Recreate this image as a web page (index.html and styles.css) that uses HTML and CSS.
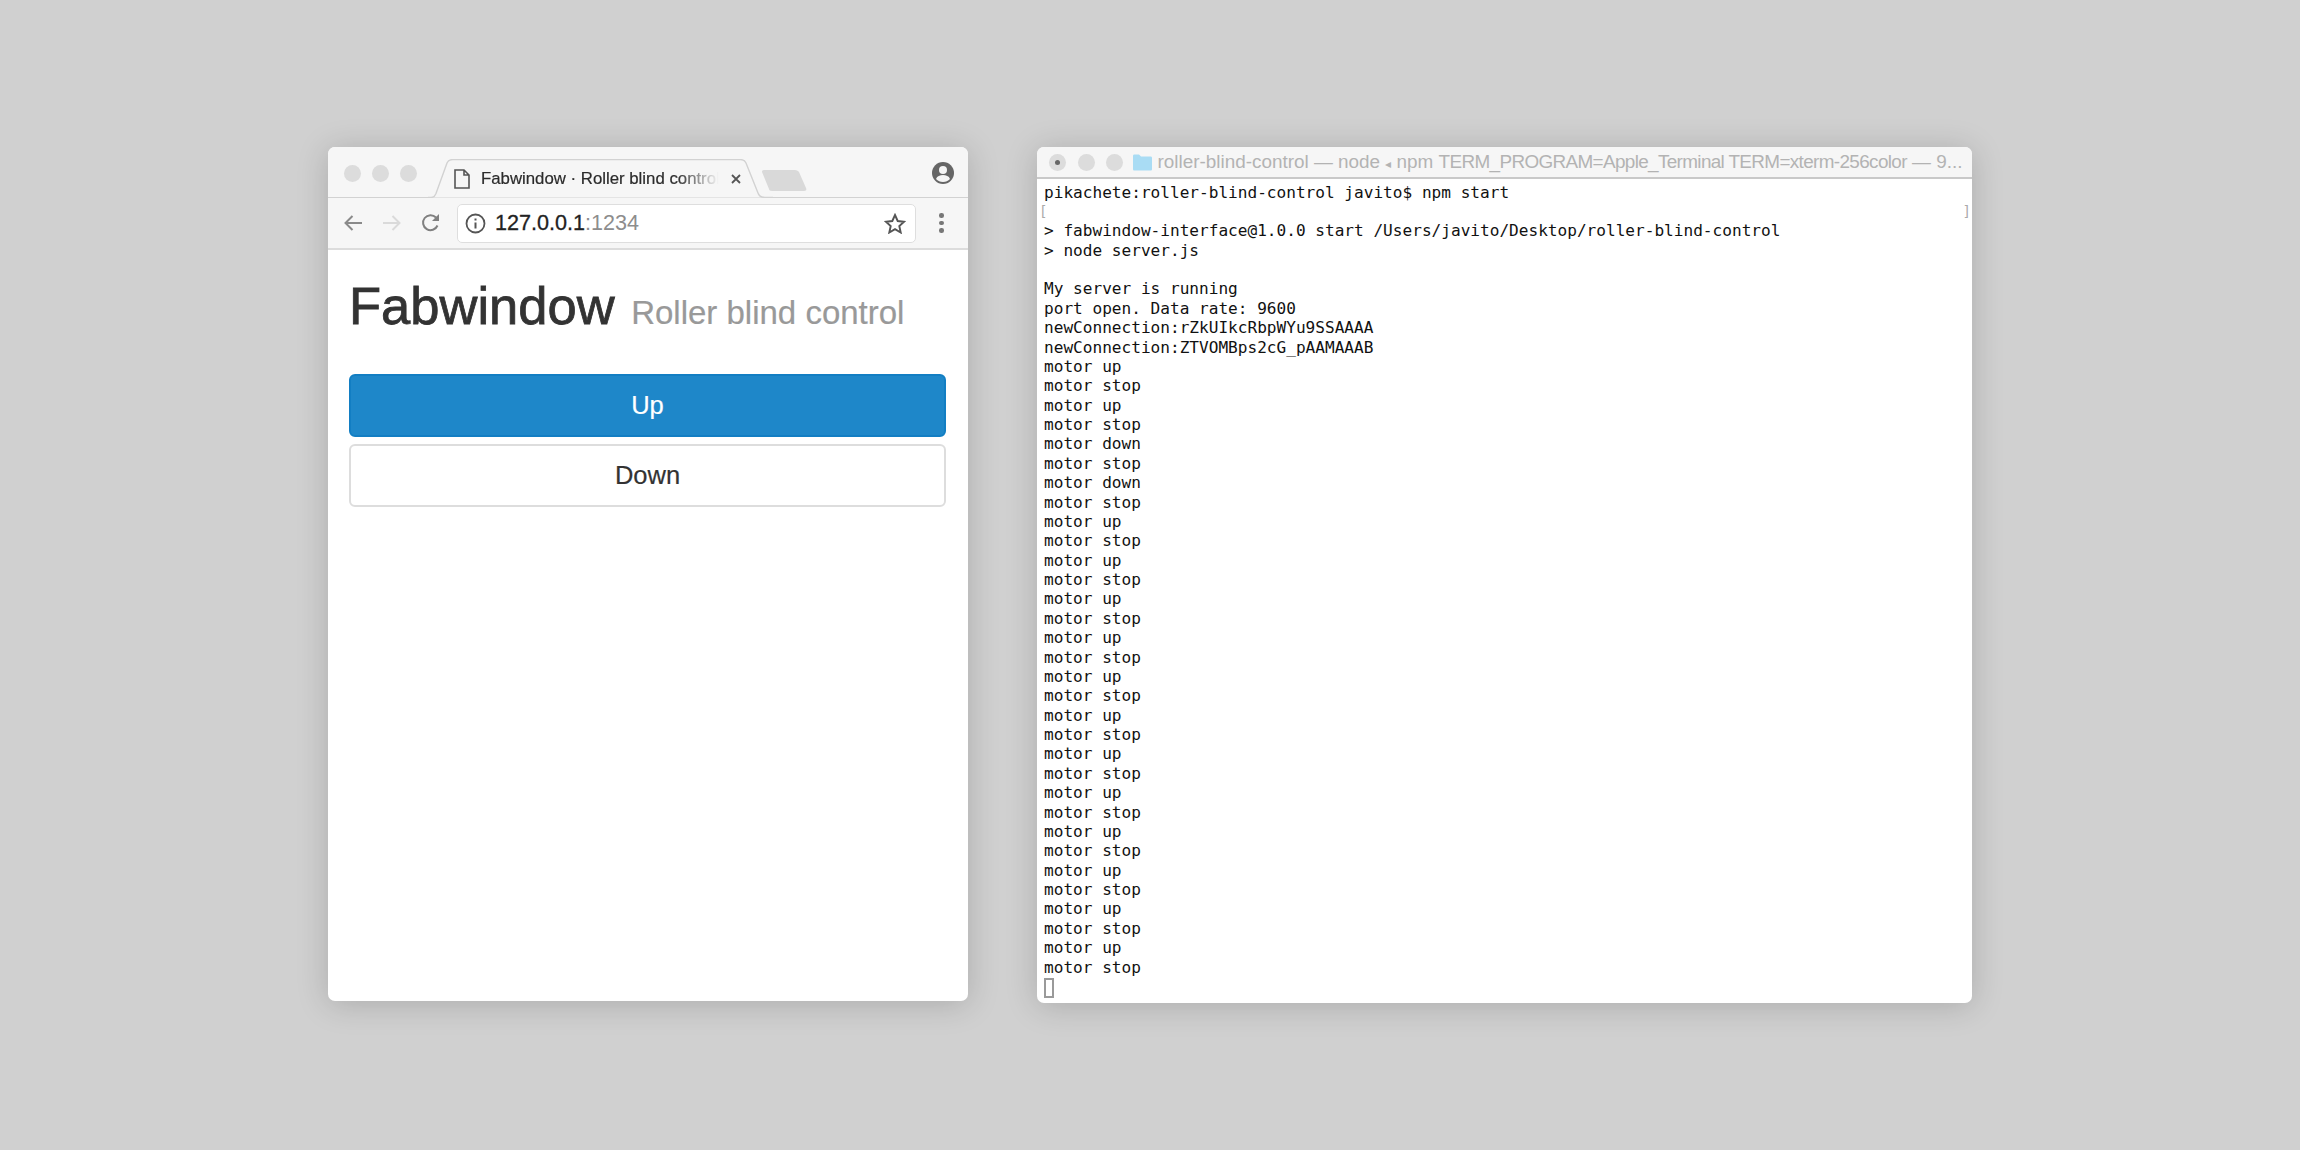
FILE: index.html
```html
<!DOCTYPE html>
<html lang="en">
<head>
<meta charset="utf-8">
<title>Fabwindow</title>
<link rel="stylesheet" href="styles.css">
</head>
<body>
<main class="desk">
  <section class="browser">
    <div class="tabstrip">
      <div class="lights"><i class="light"></i><i class="light"></i><i class="light"></i></div>
      <div class="tab">
        <svg class="tab-bg" width="345" height="39" viewBox="0 0 345 39"><path d="M0 38.5H3C6 38.5 7 37 8 34.5L19 4C20 1.5 22 .5 25 .5H312C315 .5 317 1.5 318 4L330 34C331 37 333 38.5 337 38.5H345" fill="#f6f6f6" stroke="#d2d2d2" stroke-width="1.4"/></svg>
        <svg class="doc" width="18" height="20" viewBox="0 0 18 20"><path d="M2 1H11L16 6V19H2Z M11 1V6H16" fill="none" stroke="#555" stroke-width="1.6"/></svg>
        <span class="tab-title">Fabwindow · Roller blind control</span>
        <svg class="close" width="12" height="12" viewBox="0 0 12 12"><path d="M2 2L10 10M10 2L2 10" stroke="#555" stroke-width="1.8"/></svg>
      </div>
      <svg class="newtab" width="46" height="23" viewBox="0 0 46 23"><path d="M3 1H34C36 1 37 2 38 3L45 19C46 21 45 22 43 22H11C9 22 8 21 8 20L1 3C1 2 1 1 3 1Z" fill="#d9d9d9"/></svg>
      <svg class="avatar" width="24" height="24" viewBox="0 0 24 24"><circle cx="12" cy="12" r="11" fill="#666"/><circle cx="12" cy="9" r="4" fill="#f5f5f5"/><path d="M5 18C6 15 9 14 12 14S18 15 19 18C17 20 15 21 12 21S7 20 5 18Z" fill="#f5f5f5"/></svg>
    </div>
    <div class="toolbar">
      <svg class="nav" width="20" height="18" viewBox="0 0 20 18"><path d="M19 9H3M9.500 2L2.500 9L9.500 16" fill="none" stroke="#8a8a8a" stroke-width="2"/></svg>
      <svg class="nav" width="20" height="18" viewBox="0 0 20 18"><path d="M1 9H17M10.500 2L17.500 9L10.500 16" fill="none" stroke="#dadada" stroke-width="2"/></svg>
      <svg class="nav reload" width="20" height="20" viewBox="0 0 20 20"><path d="M16.500 12.500A7.500 7.500 0 1 1 15 4.500" fill="none" stroke="#808080" stroke-width="2"/><path d="M18 1V8H11Z" fill="#808080"/></svg>
      <div class="omnibox">
        <svg class="info" width="21" height="21" viewBox="0 0 21 21"><circle cx="10.500" cy="10.500" r="9" fill="none" stroke="#555" stroke-width="1.8"/><path d="M10.500 9.500V15.500M10.500 5.500V7.500" stroke="#555" stroke-width="2"/></svg>
        <span class="url">127.0.0.1<span class="port">:1234</span></span>
        <svg class="star" width="22" height="21" viewBox="0 0 22 21"><path d="M11 2L13.700 8L20 8.700L15.300 13L16.700 19.500L11 16.200L5.300 19.500L6.700 13L2 8.700L8.300 8Z" fill="none" stroke="#555" stroke-width="1.900"/></svg>
      </div>
      <div class="dots"><i></i><i></i><i></i></div>
    </div>
    <div class="page">
      <h1 class="heading">Fabwindow <small class="sub">Roller blind control</small></h1>
      <button class="btn btn-up">Up</button>
      <button class="btn btn-down">Down</button>
    </div>
  </section>

  <section class="terminal">
    <div class="titlebar">
      <i class="tl tl-close"></i><i class="tl"></i><i class="tl"></i>
      <svg class="folder" width="20" height="17" viewBox="0 0 20 17"><path d="M1 2C1 1 1.500 .5 2.500 .5H7L9 2.500H18.500C19.500 2.500 20 3 20 4V15C20 16 19.500 16.500 18.500 16.500H2.500C1.500 16.500 1 16 1 15Z" fill="#a9dcf4"/></svg>
      <span class="term-title">roller-blind-control — node <span class="tri">◂</span> npm <span class="env">TERM_PROGRAM=Apple_Terminal TERM=xterm-256color</span> — 9...</span>
    </div>
    <div class="console">
      <div class="line">pikachete:roller-blind-control javito$ npm start</div>
      <div class="line marks"><span>[</span><span>]</span></div>
      <div class="line">&gt; fabwindow-interface@1.0.0 start /Users/javito/Desktop/roller-blind-control</div>
      <div class="line">&gt; node server.js</div>
      <div class="line">&nbsp;</div>
      <div class="line">My server is running</div>
      <div class="line">port open. Data rate: 9600</div>
      <div class="line">newConnection:rZkUIkcRbpWYu9SSAAAA</div>
      <div class="line">newConnection:ZTVOMBps2cG_pAAMAAAB</div>
      <div class="line">motor up</div>
      <div class="line">motor stop</div>
      <div class="line">motor up</div>
      <div class="line">motor stop</div>
      <div class="line">motor down</div>
      <div class="line">motor stop</div>
      <div class="line">motor down</div>
      <div class="line">motor stop</div>
      <div class="line">motor up</div>
      <div class="line">motor stop</div>
      <div class="line">motor up</div>
      <div class="line">motor stop</div>
      <div class="line">motor up</div>
      <div class="line">motor stop</div>
      <div class="line">motor up</div>
      <div class="line">motor stop</div>
      <div class="line">motor up</div>
      <div class="line">motor stop</div>
      <div class="line">motor up</div>
      <div class="line">motor stop</div>
      <div class="line">motor up</div>
      <div class="line">motor stop</div>
      <div class="line">motor up</div>
      <div class="line">motor stop</div>
      <div class="line">motor up</div>
      <div class="line">motor stop</div>
      <div class="line">motor up</div>
      <div class="line">motor stop</div>
      <div class="line">motor up</div>
      <div class="line">motor stop</div>
      <div class="line">motor up</div>
      <div class="line">motor stop</div>
      <div class="line"><i class="cursor"></i></div>
    </div>
  </section>
</main>
</body>
</html>
```
FILE: styles.css
```css
* { box-sizing: border-box; }
html, body { margin: 0; height: 100%; }
body { background: #d0d0d0; overflow: hidden; font-family: "Liberation Sans", Arial, sans-serif; }
.desk { display: flex; align-items: flex-start; gap: 69px; padding: 147px 0 0 328px; }

.browser { width: 640px; height: 854px; display: flex; flex-direction: column; background: #fff; border-radius: 7px; overflow: hidden; box-shadow: 0 3px 32px rgba(0,0,0,.18); }
.tabstrip { height: 51px; flex: none; display: flex; align-items: flex-start; background: #f6f6f6; border-bottom: 1.4px solid #d2d2d2; }
.lights { display: flex; gap: 11px; padding: 18px 0 0 16px; width: 100px; }
.light { width: 17px; height: 17px; border-radius: 50%; background: #dcdcdc; }
.tab { position: relative; width: 345px; height: 39px; margin-top: 12px; flex: none; display: flex; align-items: center; padding: 0 0 0 25px; z-index: 1; }
.tab-bg { position: absolute; left: 0; top: 0; }
.doc { position: relative; flex: none; }
.tab-title { position: relative; margin-left: 10px; width: 245px; white-space: nowrap; overflow: hidden; font-size: 16.800px; color: #2b2b2b; -webkit-text-stroke: .2px #2b2b2b; -webkit-mask-image: linear-gradient(to right, #000 80%, transparent 97%); mask-image: linear-gradient(to right, #000 80%, transparent 97%); }
.close { position: relative; margin-left: 4px; flex: none; }
.newtab { margin: 22px 0 0 -12px; flex: none; }
.avatar { margin: 14px 13px 0 auto; flex: none; }

.toolbar { height: 52px; flex: none; display: flex; align-items: center; background: #f6f6f6; border-bottom: 2px solid #dcdcdc; padding-left: 15px; }
.nav { flex: none; margin-right: 19px; }
.reload { margin-right: 16px; }
.omnibox { width: 459px; height: 39px; display: flex; align-items: center; background: #fff; border: 1.500px solid #dedede; border-radius: 5px; padding: 0 9px 0 7px; }
.info { flex: none; }
.url { margin-left: 9px; font-size: 21.600px; color: #222; -webkit-text-stroke: .3px #222; flex: 1; }
.port { color: #8d8d8d; -webkit-text-stroke: 0; }
.star { flex: none; }
.dots { display: flex; flex-direction: column; gap: 3px; margin-left: 23px; }
.dots i { width: 4.500px; height: 4.500px; border-radius: 50%; background: #777; }

.page { flex: 1; padding: 0 22px 0 21px; }
.heading { margin: 26px 0 31px; font-size: 52.500px; font-weight: 400; line-height: 60px; color: #333; -webkit-text-stroke: .8px #333; }
.sub { font-size: 33px; color: #999; -webkit-text-stroke: .2px #999; margin-left: 2px; }
.btn { display: block; width: 100%; height: 63px; margin: 0 0 7px; font-family: inherit; font-size: 25.500px; border-radius: 6px; border: 2px solid #ddd; background: #fff; color: #333; -webkit-text-stroke: .2px currentColor; }
.btn-up { background: #1e87c9; border-color: #127ec3; color: #fff; }

.terminal { width: 935px; height: 856px; display: flex; flex-direction: column; background: #fff; border-radius: 7px; overflow: hidden; box-shadow: 0 3px 32px rgba(0,0,0,.18); }
.titlebar { height: 32px; flex: none; display: flex; align-items: center; background: #f6f6f6; border-bottom: 2px solid #c9c9c9; padding-left: 12px; }
.tl { position: relative; width: 17px; height: 17px; margin-right: 11.500px; border-radius: 50%; background: #dcdcdc; flex: none; }
.tl-close::after { content: ""; position: absolute; left: 6px; top: 6px; width: 5px; height: 5px; border-radius: 50%; background: #666; }
.folder { flex: none; margin: 0 6px 0 -3px; }
.term-title { font-size: 18.900px; color: #b3b3b3; white-space: nowrap; }
.tri { font-size: 12px; }
.env { letter-spacing: -.64px; }
.console { flex: 1; padding: 3.500px 0 0 7px; font-family: "DejaVu Sans Mono", monospace; font-size: 16.100px; color: #111; }
.line { height: 19.380px; line-height: 19.380px; white-space: pre; }
.marks { display: flex; justify-content: space-between; margin: 0 1px 0 -5px; color: #aaa; font-size: 14px; }
.cursor { display: block; width: 10px; height: 20px; margin-top: 1px; border: 2px solid #9a9a9a; }
```
